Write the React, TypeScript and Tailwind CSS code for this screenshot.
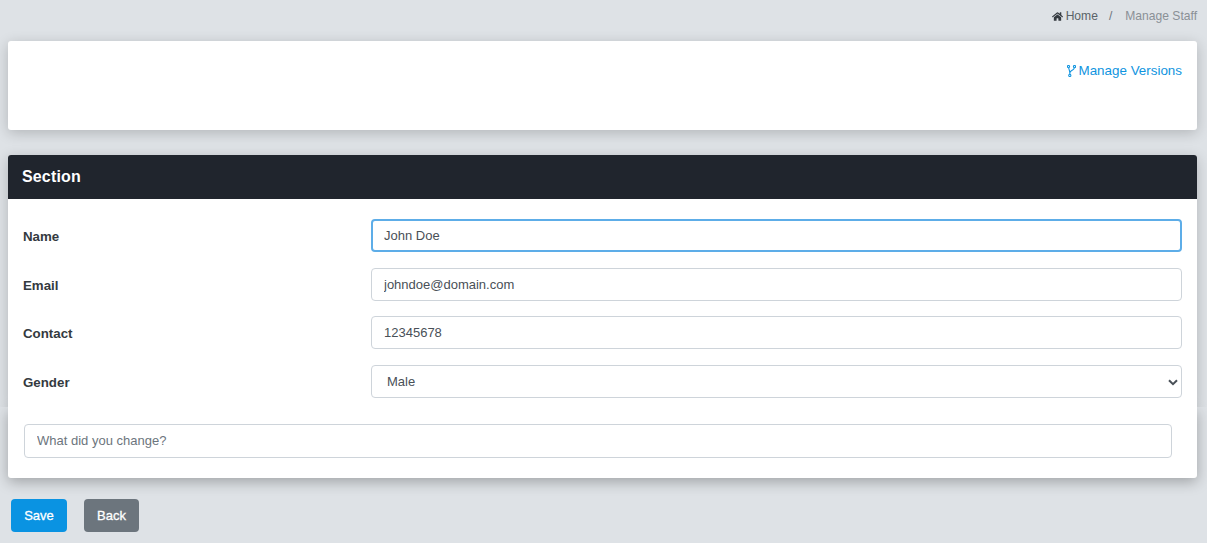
import React from "react";
import { FaHome } from "react-icons/fa";

const inputBase =
  "block w-full h-[33px] bg-white rounded-[4px] px-3 text-[13px] leading-[15px] text-[#495057] outline-none";

function Row({ label, children }: { label: string; children: React.ReactNode }) {
  return (
    <div className="flex items-center h-[33px]">
      <label className="w-[348px] shrink-0 pt-[3px] text-[13.3px] font-bold text-[#343a40]">{label}</label>
      <div className="relative flex-1">{children}</div>
    </div>
  );
}

export default function App() {
  return (
    <div
      className="h-[543px] overflow-hidden bg-[#dee2e6] pr-[10px] pl-2 text-[#343a40]"
      style={{ fontFamily: '"Liberation Sans", Arial, sans-serif' }}
    >
      <div className="flex h-[41px] items-start justify-end pt-[9px] text-[12.1px] leading-[14px]">
        <span className="flex items-center gap-[3px] text-[#5a6268]">
          <FaHome className="h-[11px] w-[11px] text-[#343a40]" />
          Home
        </span>
        <span className="ml-[11px] text-[#6c757d]">/</span>
        <span className="ml-[13px] text-[#8a9096]">Manage Staff</span>
      </div>

      <div className="flex h-[89px] justify-end rounded-[3px] bg-white pt-[22px] pr-[15px] shadow-[0_3px_14px_rgba(0,0,0,0.2)]">
        <a className="flex h-[16px] items-center gap-[3px] text-[13.4px] text-[#0f94e0]">
          <svg width="9" height="12" viewBox="0 0 9 12" fill="none" stroke="currentColor" strokeWidth="1.1">
            <circle cx="1.5" cy="1.6" r="1.1" />
            <circle cx="7.5" cy="1.6" r="1.1" />
            <circle cx="2.8" cy="10.4" r="1.1" />
            <path d="M1.7 2.7 C2 5 3 6 2.9 9.3 M7.3 2.7 C7 5.6 3.6 5 2.8 7.8" />
          </svg>
          Manage Versions
        </a>
      </div>

      <div className="relative z-10 mt-[25px] rounded-t-[3px] bg-white shadow-[0_3px_14px_rgba(0,0,0,0.2)] [clip-path:inset(-24px_-24px_0_-24px)]">
        <div className="flex h-[44px] items-center rounded-t-[3px] bg-[#20252d] px-[14px] text-[16px] font-bold tracking-[0.15px] text-white">
          Section
        </div>
        <div className="flex h-[208px] flex-col gap-[15.5px] pt-[20px] pr-[15px] pl-[15px]">
          <Row label="Name">
            <input
              defaultValue="John Doe"
              className={`${inputBase} border-2 border-[#5dade8] px-[11px]`}
            />
          </Row>
          <Row label="Email">
            <input defaultValue="johndoe@domain.com" className={`${inputBase} border border-[#ced4da]`} />
          </Row>
          <Row label="Contact">
            <input defaultValue="12345678" className={`${inputBase} border border-[#ced4da]`} />
          </Row>
          <Row label="Gender">
            <select
              defaultValue="Male"
              className={`${inputBase} appearance-none border border-[#ced4da] pl-[15px]`}
            >
              <option>Male</option>
              <option>Female</option>
            </select>
            <svg
              className="pointer-events-none absolute top-[14px] right-[4px] text-[#495057]"
              width="10"
              height="7"
              viewBox="0 0 10 7"
              fill="none"
              stroke="currentColor"
              strokeWidth="2"
            >
              <path d="M1 1.2 L5 5.2 L9 1.2" />
            </svg>
          </Row>
        </div>
      </div>

      <div className="rounded-b-[3px] bg-white pt-[17px] pr-[25px] pb-[20px] pl-[16px] shadow-[0_4px_14px_rgba(0,0,0,0.28)]">
        <input
          placeholder="What did you change?"
          className={`${inputBase} h-[34px] border border-[#ced4da] pb-[2px] placeholder:text-[#6c757d]`}
        />
      </div>

      <div className="mt-[21px] flex gap-[17px] pl-[3px]">
        <button className="h-[33px] w-[56px] rounded-[4px] bg-[#0a93e2] text-[13px] font-normal text-white [-webkit-text-stroke:0.3px_white]">Save</button>
        <button className="h-[33px] w-[55px] rounded-[4px] bg-[#6c757d] text-[13px] font-normal text-white [-webkit-text-stroke:0.3px_white]">Back</button>
      </div>
    </div>
  );
}
